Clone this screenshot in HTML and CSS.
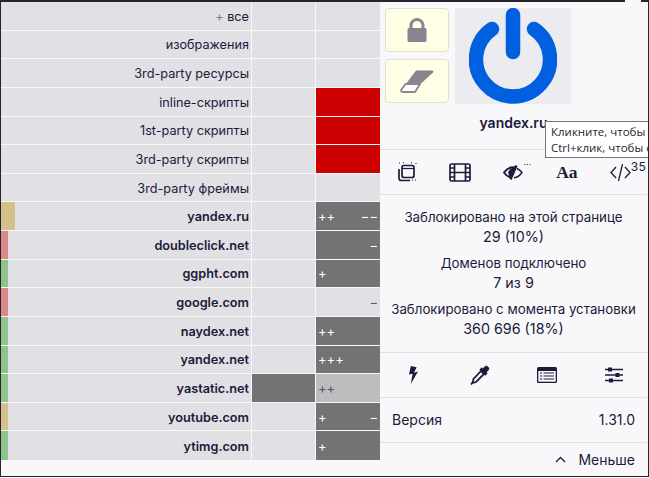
FILE: index.html
```html
<!DOCTYPE html>
<html lang="ru">
<head>
<meta charset="utf-8">
<title>uBlock Origin</title>
<link rel="stylesheet" href="styles.css">
</head>
<body>
<div class="window">
  <main class="firewall">
    <div class="row"><div class="cell name"><span class="plus-mark">+</span>&nbsp;все</div><div class="cell"></div><div class="cell"></div></div>
    <div class="row"><div class="cell name">изображения</div><div class="cell"></div><div class="cell"></div></div>
    <div class="row"><div class="cell name">3rd-party ресурсы</div><div class="cell"></div><div class="cell"></div></div>
    <div class="row"><div class="cell name">inline-скрипты</div><div class="cell"></div><div class="cell red"></div></div>
    <div class="row"><div class="cell name">1st-party скрипты</div><div class="cell"></div><div class="cell red"></div></div>
    <div class="row"><div class="cell name">3rd-party скрипты</div><div class="cell"></div><div class="cell red"></div></div>
    <div class="row"><div class="cell name">3rd-party фреймы</div><div class="cell"></div><div class="cell"></div></div>
    <div class="row"><div class="cell name dom"><i class="tag wide tan"></i>yandex.ru</div><div class="cell"></div><div class="cell grey"><span>++</span><span>−−</span></div></div>
    <div class="row"><div class="cell name dom"><i class="tag pink"></i>doubleclick.net</div><div class="cell"></div><div class="cell grey"><span></span><span>−</span></div></div>
    <div class="row"><div class="cell name dom"><i class="tag green"></i>ggpht.com</div><div class="cell"></div><div class="cell grey"><span>+</span><span></span></div></div>
    <div class="row"><div class="cell name dom"><i class="tag pink"></i>google.com</div><div class="cell"></div><div class="cell counts"><span></span><span>−</span></div></div>
    <div class="row"><div class="cell name dom"><i class="tag green"></i>naydex.net</div><div class="cell"></div><div class="cell grey"><span>++</span><span></span></div></div>
    <div class="row"><div class="cell name dom"><i class="tag green"></i>yandex.net</div><div class="cell"></div><div class="cell grey"><span>+++</span><span></span></div></div>
    <div class="row"><div class="cell name dom"><i class="tag green"></i>yastatic.net</div><div class="cell grey"></div><div class="cell light"><span>++</span><span></span></div></div>
    <div class="row"><div class="cell name dom"><i class="tag tan"></i>youtube.com</div><div class="cell"></div><div class="cell grey"><span>+</span><span>−</span></div></div>
    <div class="row"><div class="cell name dom"><i class="tag green"></i>ytimg.com</div><div class="cell"></div><div class="cell grey"><span>+</span><span></span></div></div>
  </main>
  <aside class="panel">
    <section class="top">
      <div class="side-btns">
        <button class="ybtn"><svg width="20" height="25" viewBox="0 0 20 25"><path d="M4 11V7.500a6 6 0 0 1 12 0V11" fill="none" stroke="#8a8490" stroke-width="3"/><rect x="0.500" y="10" width="19" height="14" rx="1.500" fill="#8a8490"/></svg></button>
        <button class="ybtn"><svg width="34" height="23" viewBox="0 0 34 23"><path d="M16 .500H32C33.500 .500 34 1.500 33 2.500L20 14.500H5.500Z" fill="#8a8490"/><path d="M5.500 14H20L15 22H3C1 22 .500 21 1.500 19.500Z" fill="#fff" stroke="#8a8490" stroke-width="1.800" stroke-linejoin="round"/></svg></button>
      </div>
      <div class="power"><svg width="88" height="96" viewBox="0 0 88 96"><path d="M23 21A37 37 0 1 0 65 21" fill="none" stroke="#0060df" stroke-width="14.500" stroke-linecap="round"/><path d="M44 7V44" fill="none" stroke="#0060df" stroke-width="14.500" stroke-linecap="round"/></svg></div>
    </section>
    <div class="host">yandex.ru</div>
    <nav class="tools tools-a">
      <svg width="20" height="20" viewBox="0 0 20 20" fill="none" stroke="#1c1b3a" stroke-width="1.700"><rect x="5" y="3.500" width="12" height="12" rx="2"/><path d="M5 6.500H17" stroke-width="1.200"/><path d="M2 7V16a2.500 2.500 0 0 0 2.500 2.500H13"/><path d="M2 1H3.500M6 .800H8M14 .800H16M18.500 1.500H20M18 18H20M15 18H16.500" stroke-width="1" stroke-dasharray="1 1"/></svg>
      <svg width="22" height="19" viewBox="0 0 22 19" fill="none" stroke="#1c1b3a" stroke-width="1.700"><rect x="1" y="1" width="20" height="17" rx="1.500"/><path d="M5.500 1V18M16.500 1V18M5.500 9.500H16.500"/><path d="M1 5H5.500M1 9.500H5.500M1 14H5.500M16.500 5H21M16.500 9.500H21M16.500 14H21" stroke-width="1.400"/></svg>
      <span class="tool-eye"><svg width="20" height="15" viewBox="0 0 20 15"><path d="M1 7.500C3.500 4 7 2 11 2.200L6.500 12C4.500 11.500 2.500 9.500 1 7.500Z" fill="none" stroke="#1c1b3a" stroke-width="2"/><path d="M10.500 2.500C10.500 6 9 9 6.500 11L5 7.500C6 5 8 3 10.500 2.500Z" fill="#1c1b3a"/><path d="M13.500 0.500 7.500 14.500" stroke="#1c1b3a" stroke-width="2.400"/><path d="M14 3.500C16 4.500 18 6 19 7.500C17 10.500 14.500 12.500 11 12.800" fill="none" stroke="#1c1b3a" stroke-width="1.400"/></svg><b class="dots">···</b></span>
      <span class="aa">Aa</span>
      <span class="tool-code"><svg width="21" height="17" viewBox="0 0 21 17" fill="none" stroke="#1c1b3a" stroke-width="1.300"><path d="M6 3 1 8.500 6 14M15 3 20 8.500 15 14M12.500 0 8.500 17"/></svg><b class="count">35</b></span>
    </nav>
    <section class="stats">
      <p>Заблокировано на этой странице</p><p class="val">29 (10%)</p>
      <p>Доменов подключено</p><p class="val">7 из 9</p>
      <p>Заблокировано с момента установки</p><p class="val">360 696 (18%)</p>
    </section>
    <nav class="tools tools-b">
      <svg width="11" height="18" viewBox="0 0 12 20"><path d="M3 0 1 9.500 5 8.500 3 20 11 6 6.500 7.500 9.500 1.500Z" fill="#1c1b3a"/></svg>
      <svg width="20" height="20" viewBox="0 0 20 20"><path d="M10.500 3.500 16.500 9.500" stroke="#1c1b3a" stroke-width="3.200"/><path d="M12.500 5 14.500 2C16.500 -.500 20.500 3.500 18 5.500L15 7.500Z" fill="#1c1b3a" stroke="#1c1b3a"/><path d="M11 6 14 9 6 17 2.500 18 3.500 14Z" fill="#f8f8fb" stroke="#1c1b3a" stroke-width="1.800"/><path d="M1 19.500 3 17" stroke="#1c1b3a" stroke-width="1.800"/></svg>
      <svg width="20" height="16" viewBox="0 0 20 16"><rect width="20" height="16" rx="1.500" fill="#1c1b3a"/><rect x="1.300" y="4" width="17.400" height="10.700" fill="#f8f8fb"/><path d="M3 6H5M6.500 6H17M3 9H5M6.500 9H17M3 12H5M6.500 12H17" stroke="#1c1b3a" stroke-width="1.200"/></svg>
      <svg width="18" height="16" viewBox="0 0 18 16"><path d="M0 2.500H18M0 8H18M0 13.500H18" stroke="#1c1b3a" stroke-width="1.300"/><rect x="3" y="0.500" width="4" height="4" fill="#1c1b3a"/><rect x="10.500" y="6" width="4" height="4" fill="#1c1b3a"/><rect x="4" y="11.500" width="4" height="4" fill="#1c1b3a"/></svg>
    </nav>
    <div class="version"><span>Версия</span><span>1.31.0</span></div>
    <div class="less"><svg width="11" height="7" viewBox="0 0 11 7"><path d="M1 6 5.500 1.500 10 6" fill="none" stroke="#1c1b3a" stroke-width="1.300"/></svg><span>Меньше</span></div>
  </aside>
  <div class="notch"></div>
  <div class="tooltip">Кликните, чтобы отключить<br>Ctrl+клик, чтобы отключить</div>
</div>
</body>
</html>
```

FILE: styles.css
```css
* { box-sizing: border-box; }
html, body { margin: 0; height: 100%; overflow: hidden; background: #fff; }
body { font-family: Inter, "Liberation Sans", sans-serif; color: #1c1b3a; }
.window {
  position: relative;
  display: flex;
  width: 649px;
  height: 477px;
  background: #f8f8fb;
  border-top: 2px solid #26262a;
  border-bottom: 1px solid #26262a;
  border-left: 1px solid #26262a;
  border-right: 1px solid #26262a;
}
.firewall {
  flex: none;
  width: 379px;
  height: 458px;
  display: grid;
  grid-template-rows: repeat(16, 1fr);
}
.row {
  display: grid;
  grid-template-columns: 250px 63px 64px;
  gap: 1px;
  padding-bottom: 1px;
}
.row:last-child { padding-bottom: 0; }
.cell { background: #e0e0e5; display: flex; justify-content: space-between; align-items: center; font-size: 13px; padding: 0 2px; }
.name { position: relative; justify-content: flex-end; padding: 1px 2px 0 0; color: #1c1b3a; font-size: 12.700px; }
.plus-mark { color: #7d7a92; }
.dom { font-weight: 600; }
.tag { position: absolute; left: 0; top: 0; bottom: 0; width: 7px; }
.tag.wide { width: 14px; }
.tan { background: #d4c08a; }
.pink { background: #dc8888; }
.green { background: #8cc48c; }
.red { background: #cc0000; }
.grey { background: #737373; color: #fff; }
.light { background: #bdbdbd; color: #55536e; }
.counts { color: #55536e; }
.panel { flex: none; width: 267px; height: 474px; display: flex; flex-direction: column; }
.top { display: flex; gap: 6px; padding: 6px 0 0 5px; height: 101px; }
.side-btns { display: flex; flex-direction: column; gap: 7px; }
.ybtn {
  width: 64px; height: 45px; padding: 0;
  display: flex; align-items: center; justify-content: center;
  background: #ffffe6; border: 1px solid #e2e0cc; border-radius: 4px;
}
.power { width: 116px; height: 96px; background: #ebebf0; display: flex; justify-content: center; }
.host { height: 47px; text-align: center; font-weight: 600; font-size: 14px; padding-top: 11px; border-bottom: 1px solid #e0e0e4; }
.tools { display: grid; align-items: center; justify-items: center; }
.tools-a { grid-template-columns: repeat(5, 1fr); height: 45px; border-bottom: 1px solid #e0e0e4; }
.tools-b { grid-template-columns: repeat(4, 1fr); height: 46px; border-top: 1px solid #e0e0e4; border-bottom: 1px solid #e0e0e4; }
.tool-eye, .tool-code { position: relative; display: flex; }
.dots { position: absolute; left: 20px; top: -6px; font-size: 9px; font-weight: 400; }
.count { position: absolute; left: 21px; top: -4px; font-size: 12px; font-weight: 400; line-height: 14px; letter-spacing: .3px; }
.aa { font: 700 17.500px "Liberation Serif", serif; }
.stats { height: 157px; padding-top: 12px; text-align: center; font-size: 13.300px; }
.stats p { margin: 0; line-height: 20px; }
.stats .val { font-size: 14.300px; margin-bottom: 6px; line-height: 20px; }
.version { height: 45px; padding: 0 12px 2px; display: flex; justify-content: space-between; align-items: center; font-size: 14px; border-bottom: 1px solid #e0e0e4; }
.less { display: flex; justify-content: flex-end; align-items: center; gap: 12px; padding: 0 12px; height: 33px; font-size: 14px; }
.notch { position: absolute; left: 624px; top: -2px; width: 16px; height: 2px; background: #f8f8fb; }
.tooltip {
  position: absolute; left: 544px; top: 119px;
  width: 103px; height: 37px; padding: 2px 5px;
  overflow: hidden; white-space: nowrap;
  background: #fff; border: 1px solid #767676; border-right: 0; color: #1f1f1f;
  font-family: "Open Sans", sans-serif; font-size: 11.500px; line-height: 16px;
}
```
